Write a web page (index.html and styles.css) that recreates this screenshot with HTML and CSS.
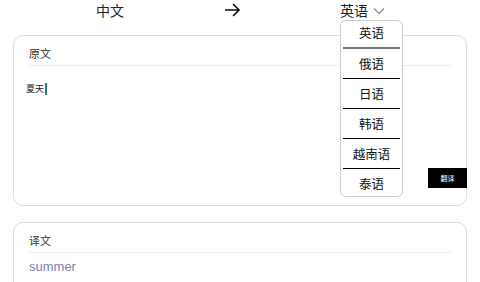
FILE: index.html
```html
<!DOCTYPE html>
<html lang="zh-CN">
<head>
<meta charset="UTF-8">
<title>翻译</title>
<link rel="stylesheet" href="styles.css">
</head>
<body>

<!-- 语言切换 -->
<div class="lang-bar">
  <div class="lang">中文</div>
  <div class="swap">
    <svg width="16" height="14" viewBox="0 0 16 14"><path d="M1 7H15M9 1L15 7L9 13" fill="none" stroke="#111" stroke-width="1.6"/></svg>
  </div>
  <div class="lang select">
    英语
    <svg class="chev" width="12" height="8" viewBox="0 0 12 8"><path d="M1 1.5L6 6.5L11 1.5" fill="none" stroke="#888" stroke-width="1.1"/></svg>
    <div class="menu">
      <div class="item first">英语</div>
      <div class="item">俄语</div>
      <div class="item">日语</div>
      <div class="item">韩语</div>
      <div class="item">越南语</div>
      <div class="item last">泰语</div>
    </div>
  </div>
</div>

<!-- 原文 -->
<div class="card source">
  <div class="card-head">原文</div>
  <div class="input">夏天<span class="caret"></span></div>
  <button class="btn">翻译</button>
</div>

<!-- 译文 -->
<div class="card result">
  <div class="card-head">译文</div>
  <div class="output">summer</div>
</div>

</body>
</html>
```

FILE: styles.css
```css
body {
  margin: 0;
  background: #fff;
  font-family: "Noto Sans CJK SC", "Liberation Sans", sans-serif;
  color: #222;
}
.lang-bar {
  display: flex;
  align-items: center;
  gap: 100px;
  padding-left: 96px;
  height: 20px;
  font-size: 14px;
  line-height: 20px;
}
.swap { display: flex; align-items: center; height: 20px; }
.select {
  position: relative;
  display: flex;
  align-items: center;
  gap: 5px;
}
.chev { margin-top: 1px; }
.menu {
  position: absolute;
  top: 20px;
  left: 0;
  width: 61px;
  background: #fff;
  border: 1px solid #ccc;
  border-radius: 6px;
  z-index: 5;
  font-size: 12.5px;
  color: #111;
}
.item {
  height: 29px;
  line-height: 29px;
  text-align: center;
  margin: 0 2px;
  border-bottom: 1px solid #000;
}
.item.first { height: 26px; line-height: 24px; border-bottom: 2px solid #777; }
.item.last { border-bottom: none; height: 27px; }
.card {
  position: relative;
  margin: 0 13px;
  border: 1px solid #ddd;
  border-radius: 10px;
  background: #fff;
}
.source { margin-top: 15px; height: 169px; }
.result { margin-top: 16px; height: 120px; }
.card-head {
  margin: 0 15px;
  padding-top: 6px;
  height: 23px;
  line-height: 23px;
  font-size: 11px;
  color: #333;
  border-bottom: 1px solid #eee;
}
.input {
  padding: 16px 12px 0;
  font-size: 9px;
  line-height: 14px;
  color: #222;
  display: flex;
  align-items: center;
}
.caret {
  display: inline-block;
  width: 2px;
  height: 12px;
  background: #2a7f7f;
  margin-left: 1px;
}
.btn {
  position: absolute;
  right: -1px;
  bottom: 17px;
  width: 39px;
  height: 20px;
  padding: 0;
  border: none;
  background: #000;
  color: #fff;
  font-family: "Noto Sans CJK SC", sans-serif;
  font-size: 7px;
}
.output {
  margin: 0 15px;
  padding-top: 1px;
  line-height: 26px;
  font-family: "Liberation Sans", sans-serif;
  font-size: 13px;
  color: #7a7fae;
}
```
